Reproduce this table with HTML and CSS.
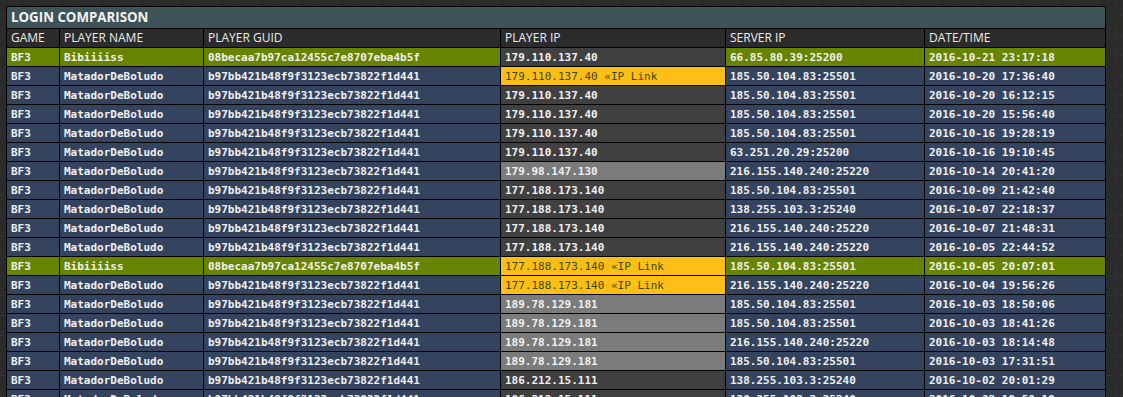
FILE: index.html
```html
<!DOCTYPE html>
<html lang="en">
<head>
<meta charset="utf-8">
<title>Login Comparison</title>
<link rel="stylesheet" href="styles.css">
</head>
<body>
<table class="cmp">
  <colgroup>
    <col class="c-game"><col class="c-name"><col class="c-guid"><col class="c-pip"><col class="c-sip"><col class="c-date">
  </colgroup>
  <thead>
    <tr class="title"><th colspan="6">LOGIN COMPARISON</th></tr>
    <tr class="head"><th>GAME</th><th>PLAYER NAME</th><th>PLAYER GUID</th><th>PLAYER IP</th><th>SERVER IP</th><th>DATE/TIME</th></tr>
  </thead>
  <tbody>
    <tr class="me"><td>BF3</td><td>Bibiiiiss</td><td>08becaa7b97ca12455c7e8707eba4b5f</td><td class="ip dark">179.110.137.40</td><td>66.85.80.39:25200</td><td>2016-10-21 23:17:18</td></tr>
    <tr><td>BF3</td><td>MatadorDeBoludo</td><td>b97bb421b48f9f3123ecb73822f1d441</td><td class="ip link">179.110.137.40 <a>«IP Link</a></td><td>185.50.104.83:25501</td><td>2016-10-20 17:36:40</td></tr>
    <tr><td>BF3</td><td>MatadorDeBoludo</td><td>b97bb421b48f9f3123ecb73822f1d441</td><td class="ip dark">179.110.137.40</td><td>185.50.104.83:25501</td><td>2016-10-20 16:12:15</td></tr>
    <tr><td>BF3</td><td>MatadorDeBoludo</td><td>b97bb421b48f9f3123ecb73822f1d441</td><td class="ip dark">179.110.137.40</td><td>185.50.104.83:25501</td><td>2016-10-20 15:56:40</td></tr>
    <tr><td>BF3</td><td>MatadorDeBoludo</td><td>b97bb421b48f9f3123ecb73822f1d441</td><td class="ip dark">179.110.137.40</td><td>185.50.104.83:25501</td><td>2016-10-16 19:28:19</td></tr>
    <tr><td>BF3</td><td>MatadorDeBoludo</td><td>b97bb421b48f9f3123ecb73822f1d441</td><td class="ip dark">179.110.137.40</td><td>63.251.20.29:25200</td><td>2016-10-16 19:10:45</td></tr>
    <tr><td>BF3</td><td>MatadorDeBoludo</td><td>b97bb421b48f9f3123ecb73822f1d441</td><td class="ip light">179.98.147.130</td><td>216.155.140.240:25220</td><td>2016-10-14 20:41:20</td></tr>
    <tr><td>BF3</td><td>MatadorDeBoludo</td><td>b97bb421b48f9f3123ecb73822f1d441</td><td class="ip dark">177.188.173.140</td><td>185.50.104.83:25501</td><td>2016-10-09 21:42:40</td></tr>
    <tr><td>BF3</td><td>MatadorDeBoludo</td><td>b97bb421b48f9f3123ecb73822f1d441</td><td class="ip dark">177.188.173.140</td><td>138.255.103.3:25240</td><td>2016-10-07 22:18:37</td></tr>
    <tr><td>BF3</td><td>MatadorDeBoludo</td><td>b97bb421b48f9f3123ecb73822f1d441</td><td class="ip dark">177.188.173.140</td><td>216.155.140.240:25220</td><td>2016-10-07 21:48:31</td></tr>
    <tr><td>BF3</td><td>MatadorDeBoludo</td><td>b97bb421b48f9f3123ecb73822f1d441</td><td class="ip dark">177.188.173.140</td><td>216.155.140.240:25220</td><td>2016-10-05 22:44:52</td></tr>
    <tr class="me"><td>BF3</td><td>Bibiiiiss</td><td>08becaa7b97ca12455c7e8707eba4b5f</td><td class="ip link">177.188.173.140 <a>«IP Link</a></td><td>185.50.104.83:25501</td><td>2016-10-05 20:07:01</td></tr>
    <tr><td>BF3</td><td>MatadorDeBoludo</td><td>b97bb421b48f9f3123ecb73822f1d441</td><td class="ip link">177.188.173.140 <a>«IP Link</a></td><td>216.155.140.240:25220</td><td>2016-10-04 19:56:26</td></tr>
    <tr><td>BF3</td><td>MatadorDeBoludo</td><td>b97bb421b48f9f3123ecb73822f1d441</td><td class="ip light">189.78.129.181</td><td>185.50.104.83:25501</td><td>2016-10-03 18:50:06</td></tr>
    <tr><td>BF3</td><td>MatadorDeBoludo</td><td>b97bb421b48f9f3123ecb73822f1d441</td><td class="ip light">189.78.129.181</td><td>185.50.104.83:25501</td><td>2016-10-03 18:41:26</td></tr>
    <tr><td>BF3</td><td>MatadorDeBoludo</td><td>b97bb421b48f9f3123ecb73822f1d441</td><td class="ip light">189.78.129.181</td><td>216.155.140.240:25220</td><td>2016-10-03 18:14:48</td></tr>
    <tr><td>BF3</td><td>MatadorDeBoludo</td><td>b97bb421b48f9f3123ecb73822f1d441</td><td class="ip light">189.78.129.181</td><td>185.50.104.83:25501</td><td>2016-10-03 17:31:51</td></tr>
    <tr><td>BF3</td><td>MatadorDeBoludo</td><td>b97bb421b48f9f3123ecb73822f1d441</td><td class="ip dark">186.212.15.111</td><td>138.255.103.3:25240</td><td>2016-10-02 20:01:29</td></tr>
    <tr><td>BF3</td><td>MatadorDeBoludo</td><td>b97bb421b48f9f3123ecb73822f1d441</td><td class="ip dark">186.212.15.111</td><td>138.255.103.3:25240</td><td>2016-10-02 19:50:19</td></tr>
  </tbody>
</table>
</body>
</html>
```

FILE: styles.css
```css
html, body {
  margin: 0;
  padding: 0;
}
body {
  padding: 6px;
  background-color: #2b2b2b;
  background-image:
    conic-gradient(at 1px 1px, transparent 75%, #3b3b3b 0),
    conic-gradient(at 1px 1px, transparent 75%, #3b3b3b 0);
  background-size: 20px 3px, 3px 20px;
  background-position: 16px 0, 0 15px;
}
.cmp {
  border-collapse: collapse;
  table-layout: fixed;
  width: 1100px;
  border: 1px solid #000;
}
.c-game { width: 53px; }
.c-name { width: 144px; }
.c-guid { width: 297px; }
.c-pip { width: 225px; }
.c-sip { width: 199px; }
.c-date { width: 181px; }

.cmp th, .cmp td {
  border: 1px solid #000;
  padding: 0 3px;
  text-align: left;
  white-space: nowrap;
  overflow: hidden;
}
.title th {
  height: 21px;
  background: #3d5358;
  color: #f4f4f4;
  font: bold 13.3px "Open Sans", "Noto Sans", sans-serif;
  padding-left: 4px;
  line-height: 21px;
}
.head th {
  height: 18px;
  background: #2b2b2b;
  color: #ececec;
  font: 12px "Open Sans", "Noto Sans", sans-serif;
  font-weight: normal;
  line-height: 18px;
  padding-left: 4px;
}
.cmp td {
  height: 18px;
  line-height: 18px;
  background: #34445e;
  color: #f0f0f0;
  font: bold 11px "DejaVu Sans Mono", monospace;
  padding-left: 4px;
}
.cmp tr.me td { background: #678400; }
.cmp td.ip.dark { background: #404040; }
.cmp td.ip.light { background: #7b7b7b; }
.cmp td.ip.link {
  background: #fdbe15;
  color: #3a4a06;
  font-weight: normal;
}
.ip a {
  color: inherit;
  text-decoration: none;
}
```
